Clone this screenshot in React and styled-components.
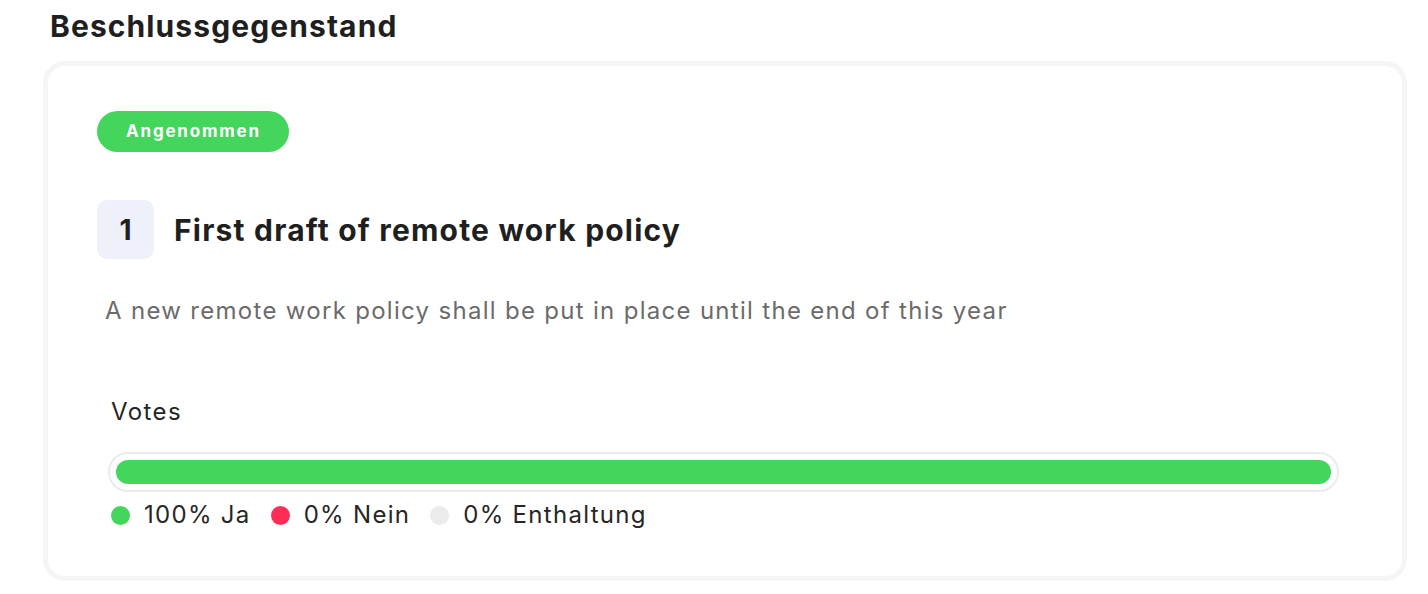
import React from 'react';
import styled, { createGlobalStyle } from 'styled-components';

const GlobalStyle = createGlobalStyle`
  body {
    margin: 0;
    background: #ffffff;
    font-family: Inter, "Noto Sans", sans-serif;
    color: #1f1f1f;
  }
`;

const Page = styled.div`
  padding: 8px 21px 0 43px;
`;

const Heading = styled.h2`
  margin: 0 0 17px 7px;
  font-size: 30px;
  font-weight: 700;
  line-height: 36px;
  letter-spacing: 1.1px;
  color: #1f1f1f;
`;

const Card = styled.section`
  border: 5px solid #f5f5f7;
  border-radius: 22px;
  padding: 45px 63px 46px 49px;
  display: flex;
  flex-direction: column;
`;

const Badge = styled.span`
  align-self: flex-start;
  background: #44d55c;
  color: #fff;
  font-size: 17px;
  font-weight: 700;
  letter-spacing: 1.8px;
  height: 41px;
  line-height: 41px;
  padding: 0 28px 0 29px;
  border-radius: 21px;
`;

const TitleRow = styled.div`
  display: flex;
  align-items: center;
  gap: 20px;
  margin-top: 48px;
`;

const NumberBox = styled.div`
  width: 57px;
  height: 59px;
  border-radius: 10px;
  background: #eef0fa;
  display: flex;
  align-items: center;
  justify-content: center;
  font-size: 28px;
  font-weight: 700;
`;

const Title = styled.h3`
  margin: 0;
  font-size: 30px;
  font-weight: 700;
  letter-spacing: 1.2px;
`;

const Description = styled.p`
  margin: 37px 0 0 8px;
  font-size: 24px;
  line-height: 30px;
  letter-spacing: 1.3px;
  color: #6b6b6b;
`;

const Votes = styled.div`
  margin: 71px 0 0 14px;
  display: flex;
  flex-direction: column;
`;

const Label = styled.span`
  font-size: 24px;
  line-height: 30px;
  letter-spacing: 1.4px;
  color: #262626;
`;

const Track = styled.div`
  margin: 25px 0 0 -3px;
  border: 2px solid #ebebeb;
  border-radius: 20px;
  padding: 6px;
  display: flex;
`;

const Fill = styled.div`
  height: 24px;
  border-radius: 12px;
  background: ${(p) => p.color};
`;

const Legend = styled.div`
  display: flex;
  align-items: center;
  gap: 20px;
  margin-top: 8px;
`;

const LegendItem = styled.div`
  display: flex;
  align-items: center;
  gap: 14px;
  font-size: 24px;
  line-height: 30px;
  letter-spacing: 1.3px;
  color: #262626;
`;

const Dot = styled.span`
  width: 19px;
  height: 19px;
  border-radius: 50%;
  background: ${(p) => p.color};
`;

const results = [
  { label: '100% Ja', color: '#44d55c', value: 100 },
  { label: '0% Nein', color: '#ff2d55', value: 0 },
  { label: '0% Enthaltung', color: '#ebebeb', value: 0 },
];

const App = () => (
  <Page>
    <GlobalStyle />
    <Heading>Beschlussgegenstand</Heading>
    <Card>
      <Badge>Angenommen</Badge>
      <TitleRow>
        <NumberBox>1</NumberBox>
        <Title>First draft of remote work policy</Title>
      </TitleRow>
      <Description>A new remote work policy shall be put in place until the end of this year</Description>
      <Votes>
        <Label>Votes</Label>
        <Track>
          {results.filter((r) => r.value > 0).map((r) => (
            <Fill key={r.label} color={r.color} style={{ width: `${r.value}%` }} />
          ))}
        </Track>
        <Legend>
          {results.map((r) => (
            <LegendItem key={r.label}>
              <Dot color={r.color} />
              {r.label}
            </LegendItem>
          ))}
        </Legend>
      </Votes>
    </Card>
  </Page>
);

export default App;
